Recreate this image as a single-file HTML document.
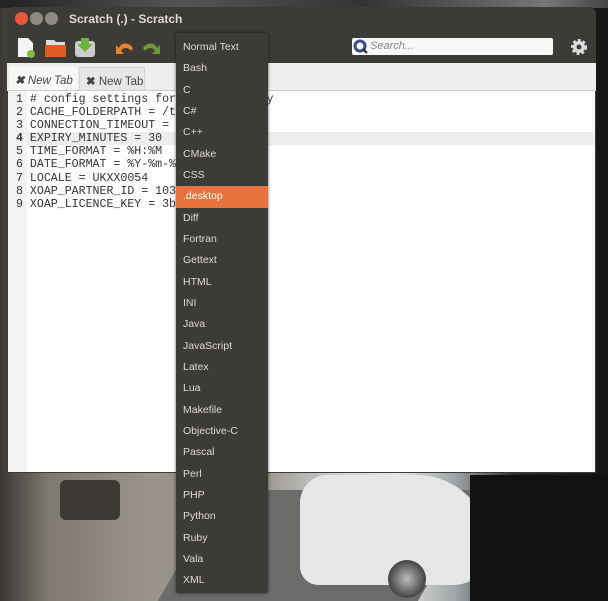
<!DOCTYPE html>
<html><head><meta charset="utf-8"><style>
*{margin:0;padding:0;box-sizing:border-box}
body{width:608px;height:601px;overflow:hidden;position:relative;font-family:"Liberation Sans",sans-serif;
background:linear-gradient(90deg,#3a3835 0,#7d7870 8%,#9a958d 25%,#8b867e 40%,#cfcfcc 55%,#e8e8e6 65%,#9fa3a5 75%,#2a2a2a 85%,#151515 100%)}
.bgtop{position:absolute;left:0;top:0;width:608px;height:8px;background:linear-gradient(90deg,#222,#555 30%,#333 60%,#777 90%,#444)}
.g1{position:absolute;left:190px;top:490px;width:260px;height:111px;background:#6b6b6a;transform:skewX(-30deg)}
.g2{position:absolute;left:300px;top:475px;width:190px;height:110px;background:#e4e6e7;border-radius:30px 80px 40px 20px}
.g3{position:absolute;left:470px;top:475px;width:138px;height:126px;background:#111}
.g4{position:absolute;left:60px;top:480px;width:60px;height:40px;background:#3d3a36;border-radius:6px}
.screw{position:absolute;left:388px;top:560px;width:38px;height:38px;border-radius:50%;background:radial-gradient(#bbb,#444 70%)}
.win{position:absolute;left:7px;top:7px;width:589px;height:466px;background:#3c3b37;border-radius:7px 7px 0 0;overflow:hidden}
.title{position:absolute;left:62px;top:5px;color:#dfdbd2;font-weight:bold;font-size:12px}
.btn{position:absolute;top:5px;width:13px;height:13px;border-radius:50%}
.tabs{position:absolute;left:0;top:56px;width:589px;height:28px;background:#efeeec}
.tab{position:absolute;top:4px;height:24px;font-size:11.5px;color:#444;padding:6px 0 0 6px;white-space:nowrap;overflow:hidden}
.ed{position:absolute;left:1px;top:83px;width:587px;height:382px;background:#fff;border-top:1px solid #ccc}
.gut{position:absolute;left:0;top:0;width:19px;height:100%;background:#f2f2f2}
.code{position:absolute;left:8px;top:2px;font-family:"Liberation Mono",monospace;font-size:11.6px;line-height:13.1px;color:#333;white-space:pre}
.hl{position:absolute;left:19px;top:41px;width:568px;height:13px;background:#eeedeb}
.menu{position:absolute;left:176px;top:33px;width:92px;height:560px;background:#3c3b37;box-shadow:0 0 3px rgba(0,0,0,.6);border-radius:2px}
.menu div{height:21.34px;line-height:21.34px;padding-left:7px;color:#dfdbd2;font-size:10.5px}
.menu .sel{background:#e9733e;color:#fff}
.search{position:absolute;width:201px;height:17px;background:#f8f8f8;border-radius:2px;font-style:italic;font-size:11px;color:#888;padding:2px 0 0 18px}
</style></head><body>
<div class="bgtop"></div><div class="g4"></div><div class="g1"></div><div class="g2"></div><div class="g3"></div><div class="screw"></div>
<div class="win">
<div class="btn" style="left:8px;background:#e9573b"></div>
<div class="btn" style="left:23px;background:#8d8a82"></div>
<div class="btn" style="left:38px;background:#8d8a82"></div>
<div class="title">Scratch (.) - Scratch</div>
<svg style="position:absolute;left:8px;top:28px" width="160" height="24">
<path d="M3 3h10l5 5v14H3z" fill="#f4f4f2"/><circle cx="16" cy="19" r="4" fill="#7fbd3a"/>
<path d="M31 5h8l2 2h9v15H31z" fill="#ddd"/><path d="M30 10h21v12H30z" fill="#e05a22"/>
<rect x="60" y="6" width="20" height="16" rx="3" fill="#ccc"/><path d="M66 3h8v6h4l-8 8-8-8h4z" fill="#6cb33e"/>
<path d="M118 13c-4-6-12-6-14 0l-3-3v9h8l-3-3c2-4 7-4 10 0z" fill="#e98330"/>
<path d="M128 13c4-6 12-6 14 0l3-3v9h-8l3-3c-2-4-7-4-10 0z" fill="#6f9a3a"/>
</svg>
<div class="search" style="left:345px;top:31px">Search...</div>
<svg style="position:absolute;left:346px;top:32px" width="16" height="16"><circle cx="7" cy="7" r="5" fill="none" stroke="#3a4a8a" stroke-width="3"/><path d="M10 10l4 4" stroke="#222" stroke-width="2"/></svg>
<svg style="position:absolute;left:563px;top:31px" width="18" height="18"><circle cx="9" cy="9" r="6" fill="#ddd" stroke="#ddd" stroke-width="4" stroke-dasharray="2.5 2"/><circle cx="9" cy="9" r="2.5" fill="#3c3b37"/></svg>
<div class="tabs">
<div class="tab" style="left:2px;width:68px;background:#f7f7f6;font-style:italic"><b>✖</b> New Tab</div>
<div class="tab" style="left:72px;width:66px;background:#e8e7e5;border:1px solid #d5d4d1"><b>✖</b> New Tab</div>
</div>
<div class="ed"><div class="gut"></div><div class="hl"></div>
<div class="code">1 # config settings for our daemon.py
2 CACHE_FOLDERPATH = /tmp
3 CONNECTION_TIMEOUT = 5
<b>4</b> EXPIRY_MINUTES = 30
5 TIME_FORMAT = %H:%M
6 DATE_FORMAT = %Y-%m-%d
7 LOCALE = UKXX0054
8 XOAP_PARTNER_ID = 10345
9 XOAP_LICENCE_KEY = 3bsc</div></div>
</div>
<div class="menu" style="padding-top:4px">
<div>Normal Text</div><div>Bash</div><div>C</div><div>C#</div><div>C++</div><div>CMake</div><div>CSS</div><div class="sel">.desktop</div><div>Diff</div><div>Fortran</div><div>Gettext</div><div>HTML</div><div>INI</div><div>Java</div><div>JavaScript</div><div>Latex</div><div>Lua</div><div>Makefile</div><div>Objective-C</div><div>Pascal</div><div>Perl</div><div>PHP</div><div>Python</div><div>Ruby</div><div>Vala</div><div>XML</div>
</div>
</body></html>
